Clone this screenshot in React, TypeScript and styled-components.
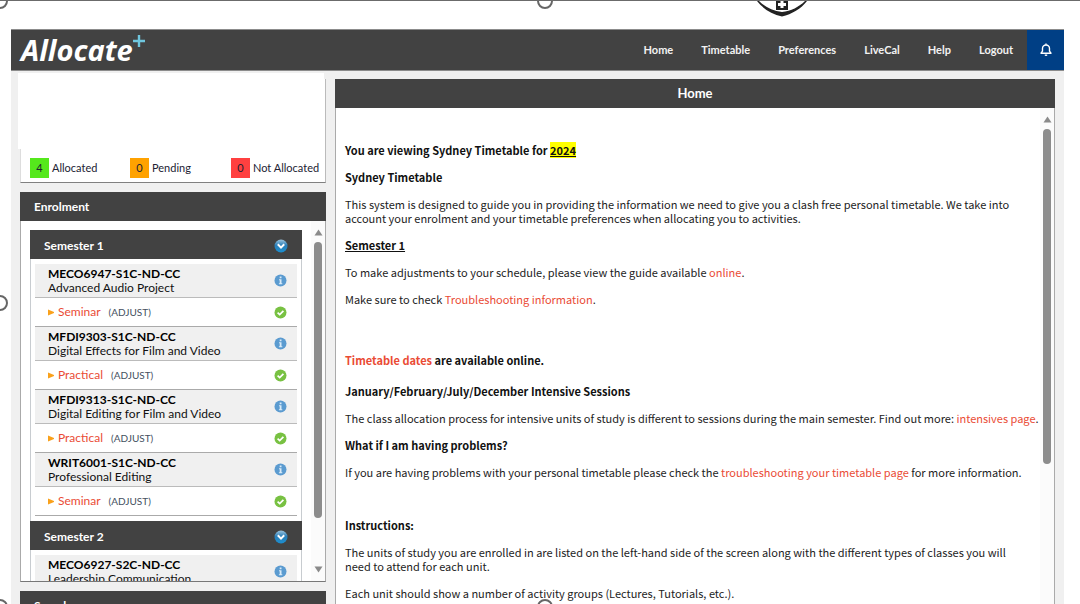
import React from "react";
import styled, { createGlobalStyle, css } from "styled-components";

const Global = createGlobalStyle`
  * { box-sizing: border-box; }
  html, body { margin: 0; background: #fff; }
  body {
    font-family: Lato, "Liberation Sans", sans-serif;
    font-size: 12px;
    line-height: 14px;
    color: #222;
    overflow: hidden;
  }
  p, h1, h2, h3, ul { margin: 0; padding: 0; font-weight: normal; font-size: inherit; }
  ul { list-style: none; }
  a { color: inherit; text-decoration: none; }
  button { border: 0; padding: 0; margin: 0; background: none; font: inherit; color: inherit; cursor: pointer; }
`;

const Frame = styled.div`
  position: relative;
  height: 100vh;
  display: flex;
  flex-direction: column;
  overflow: hidden;
  border-top: 1px solid #6b6b6b;
`;

const Strip = styled.div`
  flex: none;
  height: 28px;
`;

const Crest = styled.svg`
  position: absolute;
  top: 0;
  left: 750px;
`;

const Handle = styled.span<{ $x: string; $y: string }>`
  position: absolute;
  left: ${(p) => p.$x};
  top: ${(p) => p.$y};
  width: 16px;
  height: 16px;
  margin: -8px 0 0 -8px;
  border: 2px solid #666;
  border-radius: 50%;
  background: #fff;
`;

const Shell = styled.div`
  flex: 1;
  min-height: 0;
  margin: 0 16px 0 11px;
  display: flex;
  flex-direction: column;
  background: #f0f0f0;
`;

const Header = styled.header`
  flex: none;
  height: 42px;
  display: flex;
  align-items: stretch;
  justify-content: space-between;
  background: #424242;
  border-top: 1px solid #8c8c8c;
  border-bottom: 1px solid #8c8c8c;
`;

const Brand = styled.a`
  display: flex;
  align-items: center;
  padding-left: 10px;
  font: italic bold 29px/42px "Open Sans", sans-serif;
  color: #fff;
`;

const Plus = styled.svg`
  margin-bottom: 18px;
`;

const Nav = styled.nav`
  display: flex;
  align-items: center;
  gap: 28px;
  color: #f2f2f2;
  font-weight: bold;
  font-size: 11px;
`;

const Bell = styled.button`
  width: 37px;
  align-self: stretch;
  margin-left: -14px;
  display: flex;
  align-items: center;
  justify-content: center;
  background: #003f85;
`;

const Columns = styled.div`
  flex: 1;
  min-height: 0;
  display: flex;
  gap: 9px;
  padding: 8px 9px 0;
`;

const Side = styled.aside`
  flex: none;
  width: 306px;
  display: flex;
  flex-direction: column;
  gap: 9px;
`;

const Summary = styled.section`
  position: relative;
  flex: none;
  height: 104px;
  display: grid;
  grid-template-columns: 100px 101px auto;
  align-items: end;
  padding: 0 0 4px 9px;
  background: #fff;
  border-right: 1px solid #bbb;
  border-left: 1px solid #ddd;
  border-bottom: 1px solid #808080;

  &::before {
    content: "";
    position: absolute;
    top: -6px;
    left: -3px;
    width: 306px;
    height: 76px;
    background: #fff;
  }
`;

const Status = styled.span`
  display: flex;
  align-items: center;
  gap: 3px;
  font-size: 11px;
  color: #223;
`;

const Count = styled.span<{ $color: string }>`
  width: 19px;
  height: 20px;
  line-height: 20px;
  text-align: center;
  background: ${(p) => p.$color};
`;

const panel = css`
  display: flex;
  flex-direction: column;
  background: #fff;
  border: 1px solid #aaa;
  border-top: 0;
`;

const Enrolment = styled.section`
  ${panel}
  flex: none;
  height: 390px;
  border-bottom-color: #777;
`;

const Search = styled.section`
  ${panel}
  flex: none;
`;

const Main = styled.main`
  ${panel}
  flex: 1;
  min-width: 0;
  border-bottom: 0;
`;

const PanelTitle = styled.h2<{ $center?: boolean }>`
  flex: none;
  height: 29px;
  margin: 0 -1px;
  padding: 0 14px;
  line-height: 29px;
  background: #424242;
  color: #fff;
  font-weight: bold;
  font-size: ${(p) => (p.$center ? 13 : 12)}px;
  text-align: ${(p) => (p.$center ? "center" : "left")};
`;

const Scroller = styled.div`
  flex: 1;
  min-height: 0;
  display: flex;
  overflow: hidden;
`;

const Track = styled.div`
  flex: none;
  width: 14px;
  display: flex;
  flex-direction: column;
  align-items: center;
  gap: 6px;
  padding: 8px 0;
  background: #fbfbfb;
`;

const Thumb = styled.div<{ $share: number }>`
  flex: ${(p) => p.$share} 0 0;
  width: 8px;
  border-radius: 4px;
  background: #8c8c8c;
`;

const Rest = styled.div<{ $share: number }>`
  flex: ${(p) => p.$share} 0 0;
`;

const Groups = styled.div`
  flex: 1;
  min-width: 0;
  padding: 9px 9px 0 9px;
`;

const Group = styled.section`
  border: 1px solid #c8ccd0;
  border-top: 0;
  border-bottom: 0;
`;

const GroupHead = styled.button`
  display: flex;
  align-items: center;
  justify-content: space-between;
  width: calc(100% + 2px);
  height: 29px;
  margin: 0 -1px;
  padding: 2px 14px 0;
  background: #424242;
  color: #fff;
  font-weight: bold;
`;

const Units = styled.ul`
  padding: 5px 4px;
`;

const Unit = styled.li`
  height: 34px;
  display: flex;
  align-items: center;
  justify-content: space-between;
  padding: 0 10px 0 13px;
  background: #f0f0f0;
  border-bottom: 1px solid #bbb;
  color: #111;
  line-height: 14px;
`;

const Code = styled.strong`
  display: block;
  color: #000;
`;

const Activity = styled.li`
  height: 29px;
  display: flex;
  align-items: center;
  gap: 4px;
  padding: 0 10px 0 13px;
  border-bottom: 1px solid #aaa;
`;

const ActivityLink = styled.a`
  color: #ea4b35;
`;

const Adjust = styled.a`
  flex: 1;
  margin-left: 4px;
  font-size: 10px;
  color: #445060;
`;

const Article = styled.article`
  flex: 1;
  min-width: 0;
  display: flex;
  flex-direction: column;
  gap: 13px;
  padding: 35px 0 0 9px;
  font-family: "Noto Sans CJK SC", "Open Sans", sans-serif;
  font-size: 11px;
`;

const Text = styled.p<{ $inset?: boolean }>`
  padding-right: ${(p) => (p.$inset ? 12 : 0)}px;
`;

const Heading = styled.h3<{ $gap?: number; $underline?: boolean }>`
  margin-top: ${(p) => p.$gap || 0}px;
  font-weight: bold;
  color: #111;
  text-decoration: ${(p) => (p.$underline ? "underline" : "none")};
`;

const Year = styled.mark`
  background: #ffff00;
  color: #111;
  text-decoration: underline;
`;

const Link = styled.a`
  color: #ea4b35;
`;

const ArrowUp = () => (
  <svg width="9" height="7" viewBox="0 0 9 7"><path d="M4.5 0.5 8.5 6.5H.5z" fill="#8a8a8a" /></svg>
);
const ArrowDown = () => (
  <svg width="9" height="7" viewBox="0 0 9 7"><path d="M4.5 6.5 8.5.5H.5z" fill="#8a8a8a" /></svg>
);
const Collapse = () => (
  <svg width="14" height="14" viewBox="0 0 14 14">
    <defs>
      <linearGradient id="ball" x1="0" y1="0" x2="0" y2="1">
        <stop offset="0" stopColor="#9cc4de" />
        <stop offset=".45" stopColor="#2c7fb8" />
        <stop offset="1" stopColor="#1b8fd0" />
      </linearGradient>
    </defs>
    <circle cx="7" cy="7" r="6.5" fill="url(#ball)" />
    <path d="M3.8 5.2 7 8.6l3.2-3.4" fill="none" stroke="#fff" strokeWidth="2" />
  </svg>
);
const Info = () => (
  <svg width="13" height="13" viewBox="0 0 13 13">
    <circle cx="6.5" cy="6.5" r="6" fill="#5b9bd0" />
    <path d="M5.7 2.6h1.8v1.6H5.7zM5 5.3h2.5v3.9h.8v1H4.9v-1h.8V6.3H5z" fill="#d9ebf8" />
  </svg>
);
const Tick = () => (
  <svg width="13" height="13" viewBox="0 0 13 13">
    <circle cx="6.5" cy="6.5" r="6" fill="#78c142" />
    <path d="M3.6 6.6 5.7 8.6 9.4 4.8" fill="none" stroke="#fff" strokeWidth="1.7" />
  </svg>
);
const Marker = () => (
  <svg width="6" height="7" viewBox="0 0 6 7"><path d="M0 .5 6 3v1L0 6.500z" fill="#f9a11b" /></svg>
);

const semester1 = [
  ["MECO6947-S1C-ND-CC", "Advanced Audio Project", "Seminar"],
  ["MFDI9303-S1C-ND-CC", "Digital Effects for Film and Video", "Practical"],
  ["MFDI9313-S1C-ND-CC", "Digital Editing for Film and Video", "Practical"],
  ["WRIT6001-S1C-ND-CC", "Professional Editing", "Seminar"],
];
const semester2 = [["MECO6927-S2C-ND-CC", "Leadership Communication"]];

const Semester = ({ title, units }: { title: string; units: string[][] }) => (
  <Group>
    <GroupHead>{title}<Collapse /></GroupHead>
    <Units>
      {units.map(([code, name, activity]) => (
        <React.Fragment key={code}>
          <Unit>
            <div><Code>{code}</Code>{name}</div>
            <Info />
          </Unit>
          {activity && (
            <Activity>
              <Marker />
              <ActivityLink href="#">{activity}</ActivityLink>
              <Adjust href="#">(ADJUST)</Adjust>
              <Tick />
            </Activity>
          )}
        </React.Fragment>
      ))}
    </Units>
  </Group>
);

export default function App() {
  return (
    <Frame>
      <Global />
      <Strip />
      <Crest width="64" height="17" viewBox="0 0 64 17">
        <path d="M7 0C13 8 22 13 32 15.500C42 13 51 8 57 0H55C49 6 41 10 32 11C23 10 15 6 9 0z" fill="#222" />
        <path d="M26 0h12v9H26z" fill="#222" />
        <path d="M32 0v7M28 3.500h8" stroke="#fff" strokeWidth="3" />
      </Crest>
      <Shell>
        <Header>
          <Brand href="#">
            Allocate
            <Plus width="12" height="12" viewBox="0 0 12 12"><path d="M6 0v12M0 6h12" stroke="#6fc6dd" strokeWidth="2.400" /></Plus>
          </Brand>
          <Nav>
            {["Home", "Timetable", "Preferences", "LiveCal", "Help", "Logout"].map((t) => (
              <a key={t} href="#">{t}</a>
            ))}
            <Bell aria-label="Notifications">
              <svg width="12" height="14" viewBox="0 0 12 14" fill="none" stroke="#fff" strokeWidth="1.400">
                <path d="M6 .6v1.400M1 10.200h10L9.500 8.200V5.500a3.500 3.500 0 0 0-7 0v2.700z" strokeLinejoin="round" />
                <path d="M4.800 12.200h2.400" />
              </svg>
            </Bell>
          </Nav>
        </Header>
        <Columns>
          <Side>
            <Summary>
              <Status><Count $color="#55e81c">4</Count>Allocated</Status>
              <Status><Count $color="#ffa200">0</Count>Pending</Status>
              <Status><Count $color="#ff4040">0</Count>Not Allocated</Status>
            </Summary>
            <Enrolment>
              <PanelTitle>Enrolment</PanelTitle>
              <Scroller>
                <Groups>
                  <Semester title="Semester 1" units={semester1} />
                  <Semester title="Semester 2" units={semester2} />
                </Groups>
                <Track><ArrowUp /><Thumb $share={276} /><Rest $share={36} /><ArrowDown /></Track>
              </Scroller>
            </Enrolment>
            <Search><PanelTitle>Search</PanelTitle></Search>
          </Side>
          <Main>
            <PanelTitle $center>Home</PanelTitle>
            <Scroller>
              <Article>
                <Heading>You are viewing Sydney Timetable for <Year>2024</Year></Heading>
                <Heading>Sydney Timetable</Heading>
                <Text $inset>This system is designed to guide you in providing the information we need to give you a clash free personal timetable. We take into account your enrolment and your timetable preferences when allocating you to activities.</Text>
                <Heading $underline>Semester 1</Heading>
                <Text>To make adjustments to your schedule, please view the guide available <Link href="#">online</Link>.</Text>
                <Text>Make sure to check <Link href="#">Troubleshooting information</Link>.</Text>
                <Heading $gap={34}><Link href="#">Timetable dates</Link> are available online.</Heading>
                <Heading $gap={4}>January/February/July/December Intensive Sessions</Heading>
                <Text>The class allocation process for intensive units of study is different to sessions during the main semester. Find out more: <Link href="#">intensives page</Link>.</Text>
                <Heading>What if I am having problems?</Heading>
                <Text>If you are having problems with your personal timetable please check the <Link href="#">troubleshooting your timetable page</Link> for more information.</Text>
                <Heading $gap={26}>Instructions:</Heading>
                <Text $inset>The units of study you are enrolled in are listed on the left-hand side of the screen along with the different types of classes you will need to attend for each unit.</Text>
                <Text>Each unit should show a number of activity groups (Lectures, Tutorials, etc.).</Text>
              </Article>
              <Track><ArrowUp /><Thumb $share={334} /><Rest $share={126} /></Track>
            </Scroller>
          </Main>
        </Columns>
      </Shell>
      <Handle $x="0" $y="0" />
      <Handle $x="545px" $y="0" />
      <Handle $x="0" $y="50%" />
      <Handle $x="0" $y="calc(100% + 3px)" />
      <Handle $x="545px" $y="calc(100% + 3px)" />
    </Frame>
  );
}
